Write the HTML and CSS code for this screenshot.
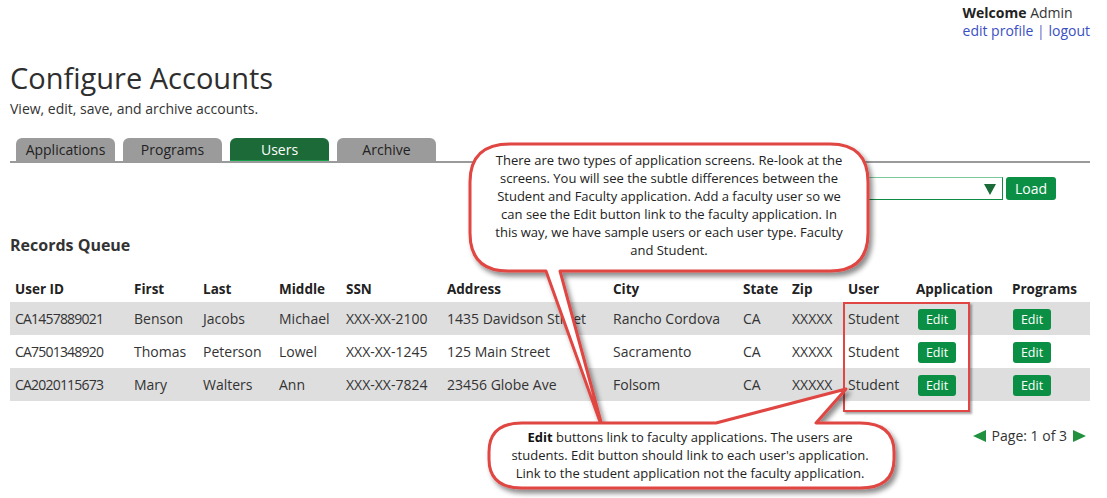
FILE: index.html
```html
<!DOCTYPE html>
<html>
<head>
<meta charset="utf-8">
<link rel="stylesheet" href="styles.css">
</head>
<body>
<div class="page">
  <div class="topbar">
    <div class="welcome">
      <div><b>Welcome</b> Admin</div>
      <div class="links"><a href="#">edit profile</a> | <a href="#">logout</a></div>
    </div>
  </div>
  <h1 class="title">Configure Accounts</h1>
  <p class="subtitle">View, edit, save, and archive accounts.</p>
  <div class="tabs">
    <div class="tab">Applications</div>
    <div class="tab">Programs</div>
    <div class="tab active">Users</div>
    <div class="tab">Archive</div>
  </div>
  <div class="loadrow">
    <div class="select"><span class="caret"></span></div>
    <button class="btn load">Load</button>
  </div>
  <h2 class="queue">Records Queue</h2>
  <table class="grid">
    <colgroup>
      <col style="width:119px"><col style="width:69px"><col style="width:76px"><col style="width:67px"><col style="width:101px"><col style="width:166px"><col style="width:130px"><col style="width:49px"><col style="width:56px"><col style="width:68px"><col style="width:96px"><col style="width:83px">
    </colgroup>
    <thead>
      <tr><th>User ID</th><th>First</th><th>Last</th><th>Middle</th><th>SSN</th><th>Address</th><th>City</th><th>State</th><th>Zip</th><th>User</th><th>Application</th><th>Programs</th></tr>
    </thead>
    <tbody>
      <tr class="odd"><td class="uid">CA1457889021</td><td>Benson</td><td>Jacobs</td><td>Michael</td><td>XXX-XX-2100</td><td>1435 Davidson Street</td><td>Rancho Cordova</td><td>CA</td><td>XXXXX</td><td>Student</td><td class="app"><button class="btn edit">Edit</button></td><td class="prog"><button class="btn edit">Edit</button></td></tr>
      <tr><td class="uid">CA7501348920</td><td>Thomas</td><td>Peterson</td><td>Lowel</td><td>XXX-XX-1245</td><td>125 Main Street</td><td>Sacramento</td><td>CA</td><td>XXXXX</td><td>Student</td><td class="app"><button class="btn edit">Edit</button></td><td class="prog"><button class="btn edit">Edit</button></td></tr>
      <tr class="odd"><td class="uid">CA2020115673</td><td>Mary</td><td>Walters</td><td>Ann</td><td>XXX-XX-7824</td><td>23456 Globe Ave</td><td>Folsom</td><td>CA</td><td>XXXXX</td><td>Student</td><td class="app"><button class="btn edit">Edit</button></td><td class="prog"><button class="btn edit">Edit</button></td></tr>
    </tbody>
  </table>
  <div class="pager">
    <span class="arrow left"></span><span>Page: 1 of 3</span><span class="arrow right"></span>
  </div>

  <div class="highlight"></div>
  <svg class="callouts" width="1107" height="498" viewBox="0 0 1107 498">
    <defs>
      <filter id="sh" x="-10%" y="-10%" width="130%" height="140%">
        <feDropShadow dx="3" dy="4" stdDeviation="2.5" flood-color="#000" flood-opacity="0.45"/>
      </filter>
    </defs>
    <path filter="url(#sh)" d="M 510 144 H 830 Q 868 144 868 182 V 233 Q 868 271 830 271 H 560 L 604 433 L 546 271 H 508 Q 470 271 470 233 V 182 Q 470 144 510 144 Z" fill="#fff" stroke="#e04643" stroke-width="3" stroke-linejoin="round"/>
    <path filter="url(#sh)" d="M 522 423 H 716 L 846 389 L 816 423 H 860 Q 894 423 894 452 V 459 Q 894 488 860 488 H 522 Q 489 488 489 459 V 452 Q 489 423 522 423 Z" fill="#fff" stroke="#e04643" stroke-width="3" stroke-linejoin="round"/>
  </svg>
  <div class="note note1">There are two types of application screens. Re-look at the screens. You will see the subtle differences between the Student and Faculty application. Add a faculty user so we can see the Edit button link to the faculty application. In this way, we have sample users or each user type. Faculty and Student.</div>
  <div class="note note2"><b>Edit</b> buttons link to faculty applications. The users are students. Edit button should link to each user's application. Link to the student application not the faculty application.</div>
</div>
</body>
</html>
```
FILE: styles.css
```css
* { box-sizing: border-box; }
html, body { margin: 0; padding: 0; background: #fff; }
body {
  font-family: "Open Sans", "Noto Sans", sans-serif;
  color: #333;
  font-size: 14px;
}
.page {
  position: relative;
  width: 1107px;
  height: 498px;
  overflow: hidden;
  padding: 0 17px 0 10px;
}
.topbar {
  display: flex;
  justify-content: flex-end;
  padding-top: 4px;
}
.welcome {
  font-size: 14px;
  line-height: 18px;
  color: #333;
}
.welcome b { color: #222; }
.links { color: #5a5fc8; }
.links a { color: #3a4fc4; text-decoration: none; }
.title {
  margin: 20px 0 0 0;
  font-size: 29px;
  font-weight: 400;
  line-height: 36px;
  color: #2e2e2e;
}
.subtitle {
  margin: 0;
  font-size: 14px;
  line-height: 20px;
  padding-top: 3px;
}
.tabs {
  display: flex;
  gap: 8px;
  padding-left: 6px;
  margin-top: 19px;
  border-bottom: 2px solid #9a9a9a;
}
.tab {
  width: 99px;
  height: 23px;
  background: #9b9b9b;
  border-radius: 6px 6px 0 0;
  text-align: center;
  font-size: 14px;
  line-height: 24px;
  color: #222;
}
.tab.active {
  background: #1c6a37;
  color: #fff;
  box-shadow: inset 0 -1px 0 #16a04c;
}
.loadrow {
  display: flex;
  justify-content: flex-end;
  gap: 3px;
  margin-top: 14px;
  padding-right: 34px;
}
.select {
  position: relative;
  width: 330px;
  height: 23px;
  border: 1px solid #0f8b45;
  border-top-color: #7cc79b;
}
.caret {
  position: absolute;
  right: 6px;
  top: 6px;
  width: 0;
  height: 0;
  border-left: 6px solid transparent;
  border-right: 6px solid transparent;
  border-top: 11px solid #1a6b37;
}
.btn {
  font-family: "Open Sans", "Noto Sans", sans-serif;
  background: #0b8f45;
  color: #fff;
  border: 0;
  border-radius: 3px;
  padding: 0;
}
.load {
  width: 50px;
  height: 23px;
  font-size: 14px;
  line-height: 23px;
}
.queue {
  margin: 34px 0 0 0;
  font-size: 16px;
  font-weight: 700;
  line-height: 22px;
  color: #333;
}
.grid {
  margin-top: 19px;
  border-collapse: collapse;
  table-layout: fixed;
  width: 1080px;
  font-size: 14px;
}
.grid th {
  text-align: left;
  font-weight: 700;
  font-size: 13.5px;
  color: #222;
  padding: 0 0 0 5px;
  height: 27px;
  line-height: 20px;
  vertical-align: middle;
  white-space: nowrap;
}
.grid td {
  padding: 0 0 0 5px;
  height: 33px;
  line-height: 20px;
  white-space: nowrap;
  color: #333;
}
.grid td.uid { letter-spacing: -0.8px; }
.grid tr.odd td { background: #dedede; }
.grid td.app { padding-left: 7px; }
.grid td.prog { padding-left: 6px; }
.edit {
  display: block;
  width: 38px;
  height: 21px;
  font-size: 12.5px;
  line-height: 21px;
  margin-top: 2px;
}
.pager {
  display: flex;
  justify-content: flex-end;
  align-items: center;
  gap: 6px;
  margin-top: 25px;
  padding-right: 4px;
  font-size: 14px;
  color: #333;
}
.arrow {
  width: 0;
  height: 0;
  border-top: 6px solid transparent;
  border-bottom: 6px solid transparent;
}
.arrow.left { border-right: 13px solid #21913f; }
.arrow.right { border-left: 13px solid #21913f; }
.highlight {
  position: absolute;
  left: 843px;
  top: 302px;
  width: 127px;
  height: 110px;
  border: 2px solid #e04643;
  box-shadow: 2px 2px 2px rgba(0,0,0,0.35);
}
.callouts {
  position: absolute;
  left: 0;
  top: 0;
}
.note {
  position: absolute;
  text-align: center;
  color: #222;
  font-size: 13px;
  line-height: 18px;
}
.note1 {
  left: 495px;
  top: 151px;
  width: 348px;
}
.note2 {
  left: 507px;
  top: 428px;
  width: 366px;
}
.note2 b { color: #111; }
```
